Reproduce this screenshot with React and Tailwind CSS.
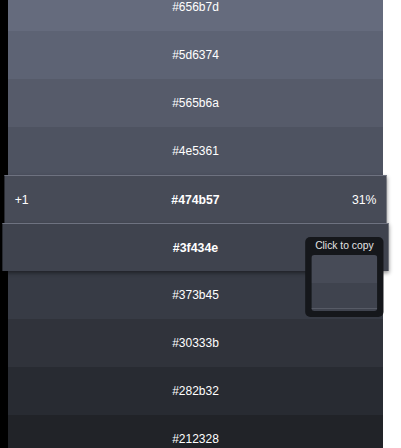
const shades = [
    '#656b7d',
    '#5d6374',
    '#565b6a',
    '#4e5361',
    '#474b57',
    '#3f434e',
    '#373b45',
    '#30333b',
    '#282b32',
    '#212328',
];

function Row({ hex, active, hovered }) {
    let cls = 'relative grid h-12 grid-cols-[1fr_auto_1fr] items-center px-[10px] text-[12px] text-white';
    if (active) cls += ' z-10 scale-x-[1.019] border-t border-[#6e7280] shadow-[0_2px_4px_rgba(0,0,0,0.45)]';
    if (hovered) cls += ' z-20 scale-x-[1.03] border-t border-[#6e7280] shadow-[0_2px_4px_rgba(0,0,0,0.45)]';

    return (
        <div className={cls} style={{ backgroundColor: hex }}>
            <span className="text-left">{active ? '+1' : ''}</span>
            <span className={active || hovered ? 'font-bold' : ''}>{hex}</span>
            <span className="text-right">{active ? '31%' : ''}</span>
            {hovered && (
                <div className="absolute right-[5px] top-[13px] z-30 w-[76px] rounded-[5px] bg-[#15171b] px-[6px] pb-[6px] pt-[2px]">
                    <div className="text-center text-[10px] leading-[14px] text-[#e4e4e4]">Click to copy</div>
                    <div className="mt-[2px] flex h-[56px] flex-col overflow-hidden rounded-[3px]">
                        <div className="h-[28px] bg-[#474b57]" />
                        <div className="h-[25px] bg-[#3f434e]" />
                        <div className="h-[3px] border-t border-[#575b66] bg-[#3f434e]" />
                    </div>
                </div>
            )}
        </div>
    );
}

export default function App() {
    return (
        <div className="h-[448px] w-[401px] overflow-hidden bg-white font-['Liberation_Sans',Arial,sans-serif]">
            <div className="flex h-full">
                <div className="w-2 shrink-0 bg-black" />
                <div className="-mt-[17px] w-[375px] shrink-0">
                    {shades.map((hex, i) => (
                        <Row key={hex} hex={hex} active={i === 4} hovered={i === 5} />
                    ))}
                </div>
            </div>
        </div>
    );
}
